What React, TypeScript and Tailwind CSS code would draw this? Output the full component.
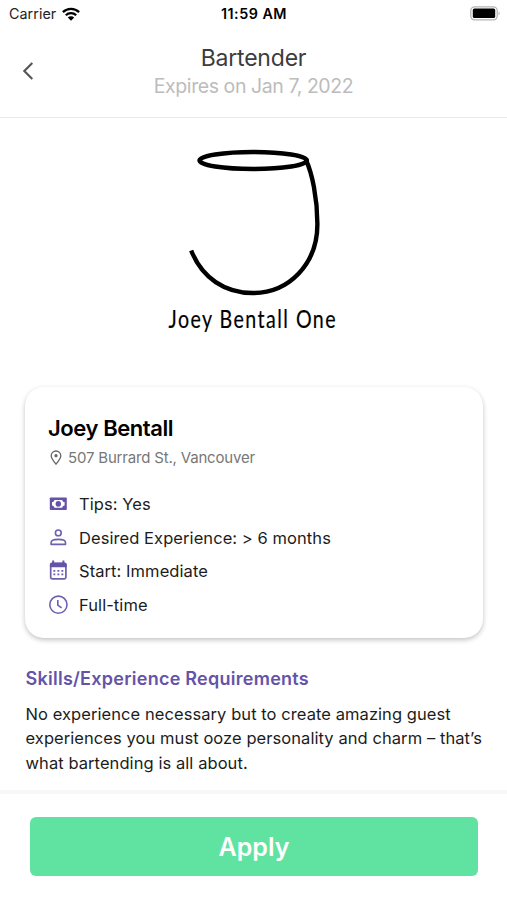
import React from "react";

const sans = "font-['Inter','Liberation_Sans',sans-serif]";

function CashIcon() {
  return (
    <svg width="20" height="20" viewBox="0 0 20 20" fill="none">
      <rect x="1.8" y="3.5" width="17" height="12.6" rx="0.8" fill="#6553a8" />
      <path d="M6.4 5.9H14.2C14.4 7.1 15.2 7.9 16.6 8.1V11.5C15.2 11.7 14.4 12.5 14.2 13.7H6.4C6.2 12.5 5.4 11.7 4 11.5V8.1C5.4 7.9 6.2 7.1 6.4 5.9Z" fill="#fff" />
      <ellipse cx="10.3" cy="9.8" rx="2.7" ry="2.9" fill="#6553a8" />
    </svg>
  );
}

function PersonIcon() {
  return (
    <svg width="20" height="20" viewBox="0 0 20 20" fill="none" stroke="#6f5fb0" strokeWidth="1.6">
      <circle cx="10.3" cy="4.9" r="2.9" />
      <path d="M3.1 16.4V14.6C3.1 12.5 6.7 11.4 10.3 11.4S17.5 12.5 17.5 14.6V16.4Z" strokeLinejoin="round" />
    </svg>
  );
}

function CalendarIcon() {
  return (
    <svg width="20" height="20" viewBox="0 0 20 20" fill="none" className="overflow-visible">
      <rect x="2.7" y="2.6" width="15.2" height="15.2" rx="1.6" stroke="#6f5fb0" strokeWidth="1.7" />
      <path d="M1.9 6.3V3.6Q1.9 1.6 3.9 1.6H16.7Q18.7 1.6 18.7 3.6V6.3Z" fill="#6553a8" />
      <path d="M5.2 -0.5V4M15.4 -0.5V4" stroke="#6553a8" strokeWidth="2" />
      <path d="M5.4 9.8H15.5M5.4 13.3H15.5" stroke="#6f5fb0" strokeWidth="1.8" strokeDasharray="1.9 2.1" />
    </svg>
  );
}

function ClockIcon() {
  return (
    <svg width="20" height="20" viewBox="0 0 20 20" fill="none" stroke="#6f5fb0" strokeWidth="1.6">
      <circle cx="10.4" cy="9.7" r="8.6" />
      <path d="M9.8 5V10.1L13.6 12.9" />
    </svg>
  );
}

function PinIcon() {
  return (
    <svg width="12" height="16" viewBox="0 0 12 16" fill="none" stroke="#666" strokeWidth="1.3">
      <path d="M6 14.2C3.2 10.9 1.2 8.3 1.2 5.8A4.8 4.8 0 0 1 10.8 5.8C10.8 8.3 8.8 10.9 6 14.2Z" />
      <circle cx="6" cy="5.7" r="1.6" fill="#666" stroke="none" />
    </svg>
  );
}

function StatusBar() {
  return (
    <div className="grid h-[27px] grid-cols-3 items-center pr-[6px] pl-[9px] text-black">
      <div className="flex items-center gap-[6px]">
        <span className="text-[14.3px] tracking-[0.05px] text-[#222]">Carrier</span>
        <svg width="18" height="14" viewBox="0 0 18 14" fill="none" stroke="#000" strokeWidth="2.3">
          <path d="M0.9 5.1A11.6 11.6 0 0 1 17.1 5.1" />
          <path d="M3.8 8.2A7.4 7.4 0 0 1 14.2 8.2" />
          <path d="M9 13.8L5.8 10.5A4.5 4.5 0 0 1 12.2 10.5Z" fill="#000" stroke="none" />
        </svg>
      </div>
      <div className="pt-px pr-[2px] text-center text-[14.3px] font-semibold tracking-[0.5px] whitespace-nowrap">11:59 AM</div>
      <div className="flex justify-end">
        <svg width="31" height="15" viewBox="0 0 31 15">
          <rect x="0.8" y="0.8" width="26.4" height="13" rx="3.8" fill="#fff" stroke="#b4b4b4" strokeWidth="1.3" />
          <rect x="2.8" y="2.6" width="22.4" height="9.4" rx="1.6" fill="#000" />
          <path d="M28.6 5.2Q30.6 7.3 28.6 9.4Z" fill="#aaa" />
        </svg>
      </div>
    </div>
  );
}

function Header() {
  return (
    <header className="grid h-[91px] grid-cols-[100px_1fr_100px] border-b border-[#e9e9e9]">
      <div className="pt-[34px] pl-[22px]">
        <svg width="13" height="20" viewBox="0 0 13 20" fill="none" stroke="#555" strokeWidth="2.1">
          <path d="M10.3 2L2.3 10L10.3 18" />
        </svg>
      </div>
      <div className="pt-[17px] text-center whitespace-nowrap">
        <h1 className="text-[23px] leading-[28px] tracking-[-0.2px] text-[#3c3c3c]">Bartender</h1>
        <p className="text-[19.5px] leading-[28px] tracking-[-0.42px] text-[#bcbcbc]">Expires on Jan 7, 2022</p>
      </div>
    </header>
  );
}

function Logo() {
  return (
    <div className="flex h-[269px] flex-col items-center pt-[27px]">
      <svg width="140" height="156" viewBox="184 145 140 156" fill="none" stroke="#000" strokeWidth="4.4">
        <ellipse cx="253.2" cy="160.5" rx="53.7" ry="8.5" />
        <path d="M306 160C312 173 317.4 198 317.4 224C317.4 264 289 293 253 293C225 293 202 278 191.2 250.5" />
      </svg>
      <span className="mt-px mr-[1px] block origin-center scale-x-[0.76] font-['Lato',sans-serif] text-[25.8px] leading-[32px] tracking-[1.9px] whitespace-nowrap text-black [-webkit-text-stroke:0.2px_black]">
        Joey Bentall One
      </span>
    </div>
  );
}

function Row({ icon, text }: { icon: React.ReactNode; text: string }) {
  return (
    <li className="flex h-[33.7px] items-center gap-[11px]">
      {icon}
      <span className="pt-px text-[16.5px] tracking-[0.07px] whitespace-nowrap text-[#1c1c1c]">{text}</span>
    </li>
  );
}

function JobCard() {
  return (
    <section className="mr-[24px] ml-[25px] h-[251px] rounded-[19px] bg-white pt-[25px] pl-[23px] shadow-[0_2px_5px_rgba(0,0,0,0.24)]">
      <h2 className="text-[22px] leading-[32px] font-semibold tracking-[-0.42px] text-black">Joey Bentall</h2>
      <div className="flex h-[27px] items-center gap-[6px] pt-px pl-[2px]">
        <PinIcon />
        <span className="pt-px text-[15px] tracking-[-0.18px] whitespace-nowrap text-[#777]">507 Burrard St., Vancouver</span>
      </div>
      <ul className="mt-[16px]">
        <Row icon={<CashIcon />} text="Tips: Yes" />
        <Row icon={<PersonIcon />} text="Desired Experience: > 6 months" />
        <Row icon={<CalendarIcon />} text="Start: Immediate" />
        <Row icon={<ClockIcon />} text="Full-time" />
      </ul>
    </section>
  );
}

export default function App() {
  return (
    <div className={`flex h-[900px] w-[507px] flex-col overflow-hidden bg-white ${sans}`}>
      <StatusBar />
      <Header />
      <main className="h-[672px]">
        <Logo />
        <JobCard />
        <section className="pt-[28px] pl-[25.5px]">
          <h3 className="text-[18px] leading-[26px] font-semibold tracking-[0.26px] text-[#6553a8]">Skills/Experience Requirements</h3>
          <p className="mt-[10px] text-[16.5px] leading-[24.4px] tracking-[0.07px] whitespace-nowrap text-[#1c1c1c]">
            No experience necessary but to create amazing guest
            <br />
            experiences you must ooze personality and charm – that’s
            <br />
            what bartending is all about.
          </p>
        </section>
      </main>
      <footer className="h-[110px] border-t-4 border-[#f7f7f7] pt-[23px] pr-[29px] pl-[30px]">
        <button className="h-[59px] w-full rounded-[6px] bg-[#60e3a1] pt-[2px] text-[25px] font-semibold text-white">Apply</button>
      </footer>
    </div>
  );
}
